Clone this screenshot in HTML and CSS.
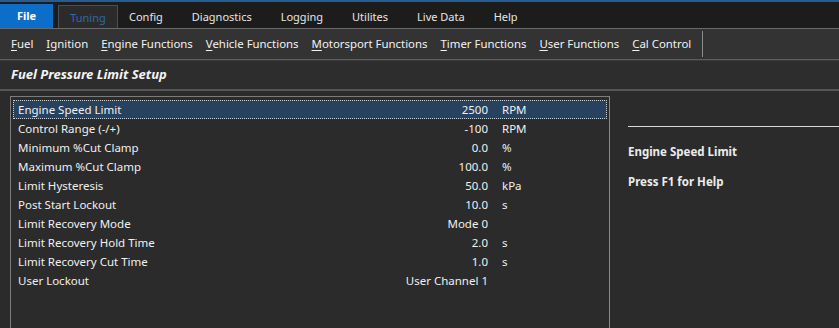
FILE: index.html
```html
<!DOCTYPE html>
<html>
<head>
<meta charset="UTF-8">
  <title>Fuel Pressure Limit Setup</title>
  <link rel="stylesheet" href="styles.css">
</head>
<body>
  <div class="menu-bar">
    <div class="menu-tab file">File</div>
    <div class="menu-tab active">Tuning</div>
    <div class="menu-tab">Config</div>
    <div class="menu-tab">Diagnostics</div>
    <div class="menu-tab">Logging</div>
    <div class="menu-tab">Utilites</div>
    <div class="menu-tab">Live Data</div>
    <div class="menu-tab">Help</div>
  </div>

  <div class="ribbon">
    <span class="ribbon-item"><u>F</u>uel</span>
    <span class="ribbon-item"><u>I</u>gnition</span>
    <span class="ribbon-item"><u>E</u>ngine Functions</span>
    <span class="ribbon-item"><u>V</u>ehicle Functions</span>
    <span class="ribbon-item"><u>M</u>otorsport Functions</span>
    <span class="ribbon-item"><u>T</u>imer Functions</span>
    <span class="ribbon-item"><u>U</u>ser Functions</span>
    <span class="ribbon-item"><u>C</u>al Control</span>
    <span class="ribbon-sep"></span>
  </div>

  <div class="page-title">Fuel Pressure Limit Setup</div>

  <div class="main">
    <div class="param-list">
      <div class="param-row selected">
        <span class="param-name">Engine Speed Limit</span>
        <span class="param-value">2500</span>
        <span class="param-unit">RPM</span>
      </div>
      <div class="param-row">
        <span class="param-name">Control Range (-/+)</span>
        <span class="param-value">-100</span>
        <span class="param-unit">RPM</span>
      </div>
      <div class="param-row">
        <span class="param-name">Minimum %Cut Clamp</span>
        <span class="param-value">0.0</span>
        <span class="param-unit">%</span>
      </div>
      <div class="param-row">
        <span class="param-name">Maximum %Cut Clamp</span>
        <span class="param-value">100.0</span>
        <span class="param-unit">%</span>
      </div>
      <div class="param-row">
        <span class="param-name">Limit Hysteresis</span>
        <span class="param-value">50.0</span>
        <span class="param-unit">kPa</span>
      </div>
      <div class="param-row">
        <span class="param-name">Post Start Lockout</span>
        <span class="param-value">10.0</span>
        <span class="param-unit">s</span>
      </div>
      <div class="param-row">
        <span class="param-name">Limit Recovery Mode</span>
        <span class="param-value">Mode 0</span>
        <span class="param-unit"></span>
      </div>
      <div class="param-row">
        <span class="param-name">Limit Recovery Hold Time</span>
        <span class="param-value">2.0</span>
        <span class="param-unit">s</span>
      </div>
      <div class="param-row">
        <span class="param-name">Limit Recovery Cut Time</span>
        <span class="param-value">1.0</span>
        <span class="param-unit">s</span>
      </div>
      <div class="param-row">
        <span class="param-name">User Lockout</span>
        <span class="param-value">User Channel 1</span>
        <span class="param-unit"></span>
      </div>
    </div>

    <div class="help-panel">
      <div class="help-rule"></div>
      <div class="help-title">Engine Speed Limit</div>
      <div class="help-text">Press F1 for Help</div>
    </div>
  </div>
</body>
</html>
```

FILE: styles.css
```css
body {
  margin: 0;
  width: 839px;
  height: 328px;
  overflow: hidden;
  background-color: #2b2b2b;
  font-family: 'Noto Sans', 'Open Sans', sans-serif;
  font-size: 11.5px;
  color: #f0f0f0;
}

.menu-bar {
  display: flex;
  align-items: flex-end;
  height: 25px;
  padding-top: 1px;
  background-color: #1c1c1c;
  border-top: 2px solid #2a5b8c;
  border-bottom: 1px solid #6a6a6a;
}

.menu-tab {
  height: 23px;
  line-height: 23px;
  padding: 0 14px 0 15px;
  color: #e6e6e6;
  font-size: 11px;
}

.menu-tab.file {
  width: 53px;
  padding: 0;
  box-sizing: border-box;
  text-align: center;
  height: 24px;
  background-color: #0c6ec9;
  color: #ffffff;
  font-weight: bold;
  margin-right: 5px;
}

.menu-tab.active {
  background-color: #2b2b2b;
  border: 1px solid #4e4e4e;
  border-bottom: none;
  color: #2e6aa6;
  padding: 0;
  width: 60px;
  box-sizing: border-box;
  text-align: center;
  margin-right: -4px;
}

.ribbon {
  display: flex;
  align-items: center;
  height: 31px;
  padding-left: 11px;
  padding-bottom: 2px;
  box-sizing: border-box;
  background-color: #333333;
  border-bottom: 1px solid #5e5e5e;
}

.ribbon-item {
  margin-right: 13px;
  font-size: 11.4px;
  color: #f2f2f2;
}

.ribbon-item u {
  text-decoration-thickness: 1px;
  text-underline-offset: 2px;
}

.ribbon-sep {
  width: 1px;
  height: 26px;
  margin-top: 2px;
  background-color: #8a8a8a;
  margin-left: -2px;
}

.page-title {
  height: 31px;
  line-height: 27px;
  padding-left: 11px;
  box-sizing: border-box;
  font-size: 13px;
  font-weight: bold;
  font-style: italic;
  color: #f4f4f4;
  background-color: #2d2d2d;
  border-top: 1px solid #3a3a3a;
  border-bottom: 2px solid #565656;
}

.main {
  display: flex;
  padding: 5px 0 0 10px;
}

.param-list {
  width: 600px;
  height: 240px;
  border: 1px solid #7c7c7c;
  border-right-color: #8a8a8a;
  padding: 3px 2px 0 2px;
  box-sizing: border-box;
}

.param-row {
  display: flex;
  height: 19px;
  line-height: 17px;
  border: 1px dotted transparent;
  box-sizing: border-box;
  padding-left: 4px;
}

.param-row.selected {
  background-color: #27425f;
  border-color: #c8d0d8;
}

.param-name {
  flex: 1;
}

.param-value {
  width: 120px;
  text-align: right;
}

.param-unit {
  width: 104px;
  padding-left: 14px;
}

.help-panel {
  flex: 1;
  padding: 30px 0 0 18px;
}

.help-rule {
  height: 1px;
  background-color: #d8d8d8;
  margin-bottom: 17px;
}

.help-title,
.help-text {
  font-weight: bold;
  font-size: 11.5px;
  color: #ececec;
  margin-bottom: 15px;
}
```
